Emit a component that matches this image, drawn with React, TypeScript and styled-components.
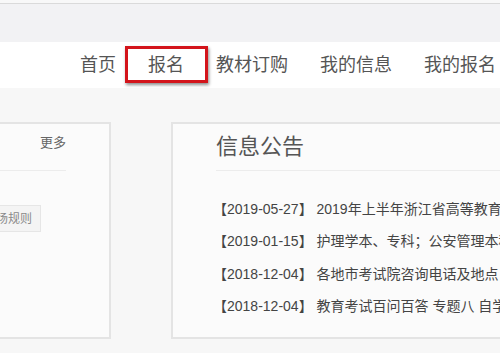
import React from "react";
import styled, { createGlobalStyle } from "styled-components";

const Global = createGlobalStyle`
  html, body { margin: 0; padding: 0; }
  body {
    width: 500px;
    height: 353px;
    overflow: hidden;
    background: #f7f7f7;
    font-family: "Liberation Sans", "Noto Sans CJK SC", sans-serif;
  }
`;

const Page = styled.div`
  width: 500px;
  height: 353px;
  overflow: hidden;
  display: flex;
  flex-direction: column;
`;

const TopStrip = styled.div`
  height: 3px;
  background: #f8f8f8;
`;

const TopBar = styled.div`
  height: 38px;
  background: #f2f2f4;
  border-top: 1px solid #dadada;
`;

const Nav = styled.nav`
  height: 46px;
  background: #ffffff;
  display: flex;
  align-items: center;
  padding-left: 64px;
  flex-shrink: 0;
`;

const NavItem = styled.a<{ $active?: boolean }>`
  position: relative;
  padding: 0 16px;
  font-size: 18px;
  line-height: 46px;
  color: #555;
  white-space: nowrap;
  text-decoration: none;
  flex-shrink: 0;
`;

const Highlight = styled.span`
  position: absolute;
  left: -7px;
  right: -8px;
  top: 4px;
  bottom: 5px;
  border: 3px solid #d3141b;
  box-shadow: 1px 2px 3px rgba(0, 0, 0, 0.45);
  pointer-events: none;
`;

const Content = styled.div`
  margin-top: 34px;
  height: 217px;
  display: flex;
  gap: 60px;
  flex-shrink: 0;
`;

const SideCard = styled.section`
  width: 200px;
  margin-left: -89px;
  flex-shrink: 0;
  background: #fbfbfb;
  border: 2px solid #e4e4e4;
  box-sizing: border-box;
`;

const SideHeader = styled.div`
  height: 47px;
  margin-right: 43px;
  border-bottom: 1px solid #ececec;
  display: flex;
  justify-content: flex-end;
  padding-top: 10px;
  box-sizing: border-box;
`;

const More = styled.span`
  font-size: 13px;
  line-height: 18px;
  color: #666;
`;

const Tag = styled.span`
  display: inline-block;
  margin-top: 34px;
  margin-left: 62px;
  padding: 0 8px;
  height: 27px;
  line-height: 27px;
  font-size: 12px;
  color: #8a8a8a;
  background: #f4f4f4;
  border: 1px solid #e6e6e6;
  box-sizing: border-box;
`;

const NoticeCard = styled.section`
  width: 380px;
  flex-shrink: 0;
  background: #fbfbfb;
  border: 2px solid #e4e4e4;
  box-sizing: border-box;
  padding-left: 43px;
  padding-top: 8px;
`;

const Title = styled.h2`
  margin: 0;
  font-size: 22px;
  line-height: 30px;
  font-weight: normal;
  color: #555;
  padding-bottom: 8px;
  border-bottom: 1px solid #ececec;
`;

const List = styled.ul`
  list-style: none;
  margin: 0;
  padding: 22px 0 0 0;
  margin-left: -3px;
`;

const Row = styled.li`
  height: 32.4px;
  line-height: 32.4px;
  font-size: 14px;
  color: #444;
  white-space: nowrap;
`;

const notices = [
  { date: "2019-05-27", text: "2019年上半年浙江省高等教育自学考试" },
  { date: "2019-01-15", text: "护理学本、专科；公安管理本科" },
  { date: "2018-12-04", text: "各地市考试院咨询电话及地点" },
  { date: "2018-12-04", text: "教育考试百问百答 专题八 自学考试" },
];

const navItems = ["首页", "报名", "教材订购", "我的信息", "我的报名"];

export default function App() {
  return (
    <Page>
      <Global />
      <TopStrip />
      <TopBar />
      <Nav>
        {navItems.map((n) => (
          <NavItem key={n} $active={n === "报名"}>
            {n}
            {n === "报名" && <Highlight />}
          </NavItem>
        ))}
      </Nav>
      <Content>
        <SideCard>
          <SideHeader>
            <More>更多</More>
          </SideHeader>
          <Tag>考场规则</Tag>
        </SideCard>
        <NoticeCard>
          <Title>信息公告</Title>
          <List>
            {notices.map((n, i) => (
              <Row key={i}>
                【{n.date}】 {n.text}
              </Row>
            ))}
          </List>
        </NoticeCard>
      </Content>
    </Page>
  );
}
